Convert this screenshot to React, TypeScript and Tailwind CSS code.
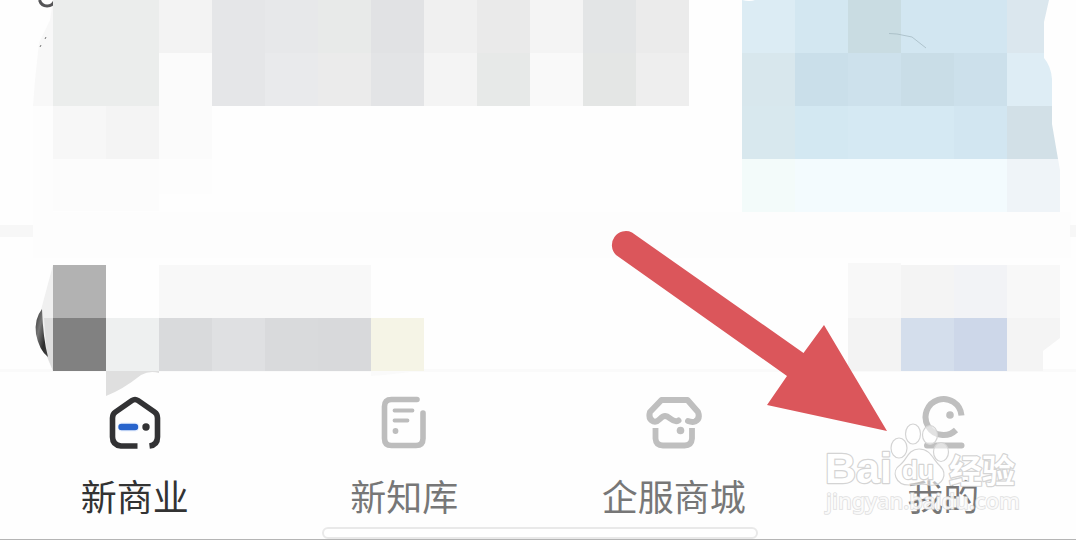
import { useState } from "react";
import type { ReactNode } from "react";

type Tile = [x: number, y: number, w: number, h: number, fill: string];

const tiles: Tile[] = [
  [53, 0, 106, 106, "#ebedec"],
  [159, 0, 53, 53, "#f3f3f3"],
  [159, 53, 53, 106, "#fbfbfb"],
  [53, 106, 53, 53, "#f7f7f7"],
  [106, 106, 53, 53, "#f4f4f4"],
  [53, 159, 106, 52, "#fcfcfc"],
  [159, 159, 53, 35, "#fdfdfd"],
  [212, 0, 53, 106, "#e5e6e8"],
  [265, 0, 53, 53, "#e7e8ea"],
  [265, 53, 53, 53, "#e9eaec"],
  [318, 0, 53, 53, "#e8eae9"],
  [318, 53, 53, 53, "#ebebeb"],
  [371, 0, 53, 53, "#e1e2e4"],
  [371, 53, 53, 53, "#e3e4e6"],
  [424, 0, 53, 53, "#f0f0f0"],
  [424, 53, 53, 53, "#f4f4f4"],
  [477, 0, 53, 53, "#eaeaea"],
  [477, 53, 53, 53, "#e7e9e8"],
  [530, 0, 53, 53, "#f4f4f4"],
  [530, 53, 53, 53, "#f9f9f9"],
  [583, 0, 53, 53, "#e3e5e6"],
  [583, 53, 53, 53, "#e4e6e5"],
  [636, 0, 53, 53, "#ebebeb"],
  [636, 53, 53, 53, "#eeeeee"],
  [742, 0, 53, 53, "#dcecf4"],
  [795, 0, 53, 53, "#d3e7f1"],
  [848, 0, 53, 53, "#c9dce2"],
  [901, 0, 106, 53, "#d2e6f1"],
  [742, 53, 53, 53, "#d8e7ed"],
  [795, 53, 53, 53, "#cadfea"],
  [848, 53, 53, 53, "#cde1ec"],
  [901, 53, 53, 53, "#c9dde7"],
  [954, 53, 53, 53, "#cce0eb"],
  [742, 106, 53, 53, "#d8e8ee"],
  [795, 106, 53, 53, "#d3e8f2"],
  [848, 106, 106, 53, "#d5e9f3"],
  [954, 106, 53, 53, "#d2e6f1"],
  [742, 159, 53, 53, "#f3fbfa"],
  [795, 159, 212, 53, "#f3fbfe"],
  [53, 265, 53, 53, "#b2b2b2"],
  [53, 318, 53, 53, "#818181"],
  [159, 265, 212, 53, "#f8f8f8"],
  [106, 318, 53, 53, "#eef0f0"],
  [159, 318, 53, 53, "#d9dadc"],
  [212, 318, 53, 53, "#dfe0e2"],
  [265, 318, 53, 53, "#d9dadc"],
  [318, 318, 53, 53, "#d8d9db"],
  [371, 318, 53, 53, "#f5f4e6"],
  [848, 263, 53, 55, "#f8f8f8"],
  [901, 265, 53, 53, "#f4f4f4"],
  [954, 265, 53, 53, "#f2f3f6"],
  [1007, 265, 53, 53, "#f8f8f8"],
  [848, 318, 53, 53, "#f3f3f3"],
  [901, 318, 53, 53, "#d4deec"],
  [954, 318, 53, 53, "#cdd7e9"],
];

function Mosaic() {
  return (
    <svg viewBox="0 0 1076 371" className="block h-auto w-full overflow-visible" aria-hidden="true">
      <defs>
        <linearGradient id="lens" x1="0" y1="0" x2="1" y2="1">
          <stop offset="0" stopColor="#333" />
          <stop offset="0.35" stopColor="#777" />
          <stop offset="0.7" stopColor="#2c2c2c" />
          <stop offset="1" stopColor="#444" />
        </linearGradient>
      </defs>
      <rect x="33" y="212" width="1038" height="46" fill="#fdfdfd" />
      <rect x="0" y="225" width="33" height="12" fill="#f7f7f7" />
      <rect x="1070" y="225" width="6" height="12" fill="#f7f7f7" />
      <rect x="0" y="369" width="1076" height="3" fill="#fafafa" />
      <path d="M53 0L50 20L39 43L35 80L33 106H53Z" fill="#f8f8f8" />
      <path d="M33 106H53V212H33Z" fill="#fdfdfd" />
      <path d="M39.500 0C42 8 52 8 55 0" fill="none" stroke="#555557" strokeWidth="3" />
      <path d="M45 39l1-2M40 47l1-2" stroke="#777" strokeWidth="1" />
      {tiles.map(([x, y, w, h, fill]) => (
        <rect key={`${x}-${y}`} x={x} y={y} width={w} height={h} fill={fill} />
      ))}
      <path d="M1007 0H1049L1044 22V53H1007Z" fill="#dbe7ee" />
      <path d="M1007 53H1044V58Q1051 66 1052 79V106H1007Z" fill="#deedf5" />
      <path d="M1007 106H1052V124L1058 159H1007Z" fill="#d2e0e7" />
      <path d="M1007 159H1058L1060 170V212H1007Z" fill="#eff4f8" />
      <path d="M889 33.500L897 34L912 37L926 48" fill="none" stroke="#9fb5bd" strokeWidth="0.7" />
      <path d="M742 0H755Q750 2 742 0Z" fill="#fff" />
      <path d="M53 265L41 310L46 355L53 371Z" fill="#f0f0f0" />
      <path d="M44 318H53V371L47 356Z" fill="#dedede" />
      <path d="M42 309Q34 319 36 334Q39 350 48 357Q43 338 42 309Z" fill="url(#lens)" />
      <path d="M106 371H159V373Q150 370 141 375Q122 390 106 396Z" fill="#dfdfdf" />
      <path d="M371 371H416Q398 374 371 376Z" fill="#fafafa" />
      <path d="M1007 318H1060V338L1043 351V371H1007Z" fill="#f4f4f4" />
    </svg>
  );
}

const HomeIcon = () => (
  <svg viewBox="0 0 60 60" className="size-15" fill="none" aria-hidden="true">
    <path d="M32.500 51H16Q7.500 50 7.500 42V23Q7.500 19 10.500 17L27 5.500Q30 3.500 33 5.500L49.500 17Q52.500 19 52.500 23V42Q52.500 50 44.500 51" stroke="#323234" strokeWidth="5.600" strokeLinejoin="round" />
    <path d="M17 32H30" stroke="#c9dcff" strokeWidth="9" strokeLinecap="round" opacity="0.4" />
    <path d="M16.500 32H30" stroke="#2864cc" strokeWidth="6.400" strokeLinecap="round" />
    <circle cx="41" cy="32" r="3.700" fill="#323234" />
  </svg>
);

const NoteIcon = () => (
  <svg viewBox="0 0 60 60" className="size-15" fill="none" stroke="#bdbdbd" strokeLinecap="round" aria-hidden="true">
    <path d="M43 4.500H17.500Q10.500 4.500 10.500 11.500V43.500Q10.500 50.500 17.500 50.500H42Q49 50.500 49 43.500V18" strokeWidth="5.600" />
    <path d="M20.500 15.500H38.500M20.500 25.500H33.500" strokeWidth="3.800" />
    <circle cx="21.500" cy="36" r="2.900" fill="#bdbdbd" stroke="none" />
  </svg>
);

const ShopIcon = () => (
  <svg viewBox="0 0 60 60" className="size-15" fill="none" stroke="#bfbfbf" strokeLinejoin="round" aria-hidden="true">
    <path d="M34.500 25.500C29 29 26 21 21 21C16 21 15 28.500 9.500 26.500Q4 24 6 17L17.500 5H43.500L54 17Q56.500 24 51 26.500Q48 27.500 44 26" strokeWidth="6" strokeLinecap="round" />
    <path d="M11.500 33V43.500Q12 50.500 19 50.500H40.500Q47.500 50.500 48 43.500V33" strokeWidth="5.800" />
    <circle cx="36.500" cy="35.500" r="3.800" fill="#bfbfbf" stroke="none" />
  </svg>
);

const ProfileIcon = () => (
  <svg viewBox="0 0 60 60" className="size-15" fill="none" stroke="#bfbfbf" aria-hidden="true">
    <path d="M48.500 20.500A18 18 0 1 0 43 35" strokeWidth="6" />
    <circle cx="37" cy="20" r="3.800" fill="#bfbfbf" stroke="none" />
    <path d="M14 50.500H48.500" strokeWidth="6" strokeLinecap="round" />
  </svg>
);

const tabs: { label: string; icon: ReactNode }[] = [
  { label: "新商业", icon: <HomeIcon /> },
  { label: "新知库", icon: <NoteIcon /> },
  { label: "企服商城", icon: <ShopIcon /> },
  { label: "我的", icon: <ProfileIcon /> },
];

function Watermark() {
  return (
    <svg viewBox="0 0 204 98" className="pointer-events-none absolute right-14 bottom-5 h-[98px] w-[204px] overflow-visible" role="img" aria-label="Baidu经验">
      <g fill="#fff" fillOpacity="0.55" stroke="#d4d4d4" strokeWidth="1.200">
        <ellipse cx="83" cy="27" rx="8" ry="10" />
        <ellipse cx="97" cy="13" rx="7.500" ry="10" />
        <ellipse cx="114" cy="14" rx="7.500" ry="9.500" />
        <ellipse cx="125" cy="31" rx="7.500" ry="9.500" />
        <path d="M103 28C92 28 91 39 84 44C75 50 79 64 93 64C100 64 106 62 113 64C127 66 132 53 124 45C117 39 115 28 103 28Z" />
      </g>
      <g fill="#fff" stroke="#d4d4d4" strokeWidth="2.400" strokeLinejoin="round" paintOrder="stroke" fontFamily="'Liberation Sans', sans-serif">
        <text x="9" y="62" fontSize="43" fontWeight="700">Bai</text>
        <text x="86" y="58" fontSize="26" fontWeight="700">du</text>
        <text x="133" y="62" fontSize="33" fontWeight="700" fontFamily="'Noto Sans CJK SC', sans-serif">经验</text>
      </g>
      <text x="10" y="88" fontSize="22" fontWeight="500" fontFamily="'Noto Sans', sans-serif" fill="#fff" fillOpacity="0.8" stroke="#d8d8d8" strokeWidth="1.600" strokeOpacity="0.8" paintOrder="stroke">jingyan.baidu.com</text>
    </svg>
  );
}

export default function App() {
  const [active, setActive] = useState(0);
  return (
    <main className="relative overflow-hidden border-b border-[#b5b5b5] bg-[#fefefe] font-['Noto_Sans_CJK_SC',sans-serif]">
      <Mosaic />
      <nav className="grid grid-cols-4 gap-1 pt-6 pl-0.5">
        {tabs.map((tab, i) => (
          <button
            key={tab.label}
            type="button"
            aria-current={i === active ? "page" : undefined}
            onClick={() => setActive(i)}
            className={`flex flex-col items-center gap-5 text-[36px] leading-10 ${i === active ? "text-[#333333]" : "text-[#777777]"}`}
          >
            {tab.icon}
            {tab.label}
          </button>
        ))}
      </nav>
      <div className="flex justify-center pt-3 pl-1">
        <div className="h-3 w-[436px] rounded-md border-2 border-[#e9e9e9] bg-white" />
      </div>
      <svg viewBox="0 0 278 202" className="pointer-events-none absolute top-[229px] left-[610px] h-[202px] w-[278px]" aria-hidden="true">
        <path d="M22 3.500L193.500 124L214 96L277 202L157 176L177 147L6 26A14 14 0 0 1 22 3.500Z" fill="#db565b" />
      </svg>
      <Watermark />
    </main>
  );
}
